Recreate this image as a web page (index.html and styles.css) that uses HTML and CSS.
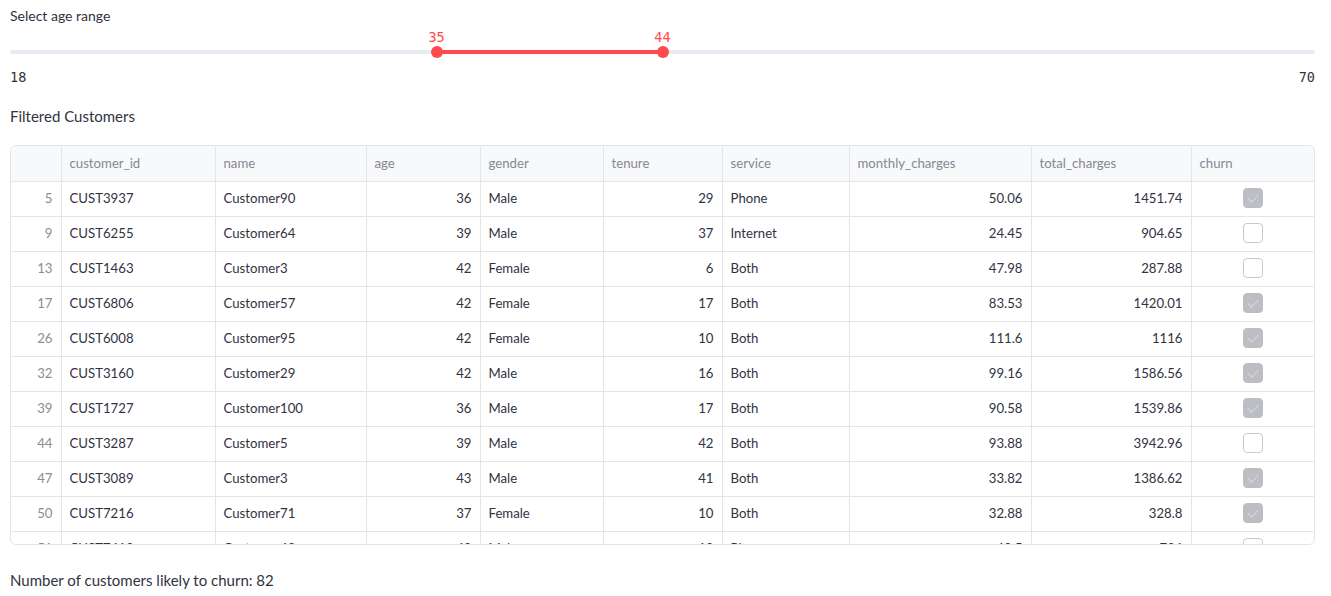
FILE: index.html
```html
<!DOCTYPE html>
<html>
<head>
<meta charset="utf-8">
<link rel="stylesheet" href="styles.css">
</head>
<body>
<div class="page">
  <div class="label">Select age range</div>
  <div class="slider">
    <div class="track">
      <div class="fill" style="left:32.69%;width:17.31%"></div>
      <div class="thumb" style="left:32.69%"><span class="val">35</span></div>
      <div class="thumb" style="left:50%"><span class="val">44</span></div>
    </div>
    <div class="ticks"><span>18</span><span>70</span></div>
  </div>
  <div class="subhead">Filtered Customers</div>
  <div class="grid-wrap">
    <table class="grid">
      <colgroup>
        <col class="c-idx"><col class="c-id"><col class="c-name"><col class="c-age"><col class="c-gender"><col class="c-tenure"><col class="c-service"><col class="c-monthly"><col class="c-total"><col class="c-churn">
      </colgroup>
      <thead>
        <tr><th></th><th>customer_id</th><th>name</th><th>age</th><th>gender</th><th>tenure</th><th>service</th><th>monthly_charges</th><th>total_charges</th><th>churn</th></tr>
      </thead>
      <tbody>
        <tr><td class="idx">5</td><td>CUST3937</td><td>Customer90</td><td class="num">36</td><td>Male</td><td class="num">29</td><td>Phone</td><td class="num">50.06</td><td class="num">1451.74</td><td class="chk"><span class="box on"></span></td></tr>
        <tr><td class="idx">9</td><td>CUST6255</td><td>Customer64</td><td class="num">39</td><td>Male</td><td class="num">37</td><td>Internet</td><td class="num">24.45</td><td class="num">904.65</td><td class="chk"><span class="box"></span></td></tr>
        <tr><td class="idx">13</td><td>CUST1463</td><td>Customer3</td><td class="num">42</td><td>Female</td><td class="num">6</td><td>Both</td><td class="num">47.98</td><td class="num">287.88</td><td class="chk"><span class="box"></span></td></tr>
        <tr><td class="idx">17</td><td>CUST6806</td><td>Customer57</td><td class="num">42</td><td>Female</td><td class="num">17</td><td>Both</td><td class="num">83.53</td><td class="num">1420.01</td><td class="chk"><span class="box on"></span></td></tr>
        <tr><td class="idx">26</td><td>CUST6008</td><td>Customer95</td><td class="num">42</td><td>Female</td><td class="num">10</td><td>Both</td><td class="num">111.6</td><td class="num">1116</td><td class="chk"><span class="box on"></span></td></tr>
        <tr><td class="idx">32</td><td>CUST3160</td><td>Customer29</td><td class="num">42</td><td>Male</td><td class="num">16</td><td>Both</td><td class="num">99.16</td><td class="num">1586.56</td><td class="chk"><span class="box on"></span></td></tr>
        <tr><td class="idx">39</td><td>CUST1727</td><td>Customer100</td><td class="num">36</td><td>Male</td><td class="num">17</td><td>Both</td><td class="num">90.58</td><td class="num">1539.86</td><td class="chk"><span class="box on"></span></td></tr>
        <tr><td class="idx">44</td><td>CUST3287</td><td>Customer5</td><td class="num">39</td><td>Male</td><td class="num">42</td><td>Both</td><td class="num">93.88</td><td class="num">3942.96</td><td class="chk"><span class="box"></span></td></tr>
        <tr><td class="idx">47</td><td>CUST3089</td><td>Customer3</td><td class="num">43</td><td>Male</td><td class="num">41</td><td>Both</td><td class="num">33.82</td><td class="num">1386.62</td><td class="chk"><span class="box on"></span></td></tr>
        <tr><td class="idx">50</td><td>CUST7216</td><td>Customer71</td><td class="num">37</td><td>Female</td><td class="num">10</td><td>Both</td><td class="num">32.88</td><td class="num">328.8</td><td class="chk"><span class="box on"></span></td></tr>
        <tr><td class="idx">51</td><td>CUST7412</td><td>Customer48</td><td class="num">40</td><td>Male</td><td class="num">12</td><td>Phone</td><td class="num">60.5</td><td class="num">726</td><td class="chk"><span class="box"></span></td></tr>
      </tbody>
    </table>
  </div>
  <div class="summary">Number of customers likely to churn: 82</div>
</div>
</body>
</html>
```

FILE: styles.css
```css
html, body {
  margin: 0;
  padding: 0;
  background: #ffffff;
}
body {
  font-family: "Lato", "Noto Sans", sans-serif;
  color: #31333f;
}
.page {
  padding: 6px 0 0 10px;
  width: 1305px;
}
.label {
  font-size: 14px;
  line-height: 20px;
  height: 20px;
}
.slider {
  padding-top: 24px;
}
.track {
  position: relative;
  height: 4px;
  border-radius: 2px;
  background: #e6eaf1;
}
.fill {
  position: absolute;
  top: 0;
  height: 4px;
  background: #ff4b4b;
}
.thumb {
  position: absolute;
  top: -4px;
  width: 12px;
  height: 12px;
  margin-left: -6px;
  border-radius: 50%;
  background: #ff4b4b;
}
.val {
  position: absolute;
  left: 50%;
  bottom: 13px;
  transform: translateX(-50%);
  font-family: "DejaVu Sans Mono", "Liberation Mono", monospace;
  font-size: 13.5px;
  line-height: 16px;
  color: #ff4b4b;
}
.ticks {
  display: flex;
  justify-content: space-between;
  margin-top: 15px;
  font-family: "DejaVu Sans Mono", "Liberation Mono", monospace;
  font-size: 13.5px;
  line-height: 16px;
  color: #31333f;
}
.subhead {
  margin-top: 21px;
  font-size: 15px;
  line-height: 20px;
}
.grid-wrap {
  margin-top: 19px;
  height: 400px;
  box-sizing: border-box;
  border: 1px solid #e4e5e9;
  border-radius: 6px;
  overflow: hidden;
}
.grid {
  width: 100%;
  table-layout: fixed;
  border-collapse: collapse;
  font-size: 13.2px;
}
.c-idx { width: 50px; }
.c-id { width: 154px; }
.c-name { width: 151px; }
.c-age { width: 114px; }
.c-gender { width: 123px; }
.c-tenure { width: 119px; }
.c-service { width: 127px; }
.c-monthly { width: 182px; }
.c-total { width: 160px; }
.grid th, .grid td {
  box-sizing: border-box;
  height: 35px;
  padding: 0 8px 1px 8px;
  border-right: 1px solid #e4e5e9;
  border-bottom: 1px solid #e4e5e9;
  text-align: left;
  white-space: nowrap;
  overflow: hidden;
  font-weight: normal;
}
.grid th:last-child, .grid td:last-child {
  border-right: none;
}
.grid th {
  height: 35px;
  padding-bottom: 0;
  background: #f8f9fb;
  color: #868892;
}
.grid td.idx {
  text-align: right;
  color: #8b8d95;
}
.grid td.num {
  text-align: right;
}
.grid td.chk {
  text-align: center;
  padding: 0 0 1px 0;
}
.box {
  display: inline-block;
  vertical-align: middle;
  width: 20px;
  height: 20px;
  box-sizing: border-box;
  border: 1px solid #c9cacf;
  border-radius: 4px;
  background: #ffffff;
  position: relative;
}
.box.on {
  border-color: #bdbec3;
  background: #bdbec3;
}
.box.on::after {
  content: "";
  position: absolute;
  left: 6px;
  top: 3px;
  width: 5px;
  height: 9px;
  border-right: 1.5px solid #d8d9dc;
  border-bottom: 1.5px solid #d8d9dc;
  transform: rotate(45deg);
}
.summary {
  margin-top: 23px;
  font-size: 15px;
  line-height: 24px;
}
```
